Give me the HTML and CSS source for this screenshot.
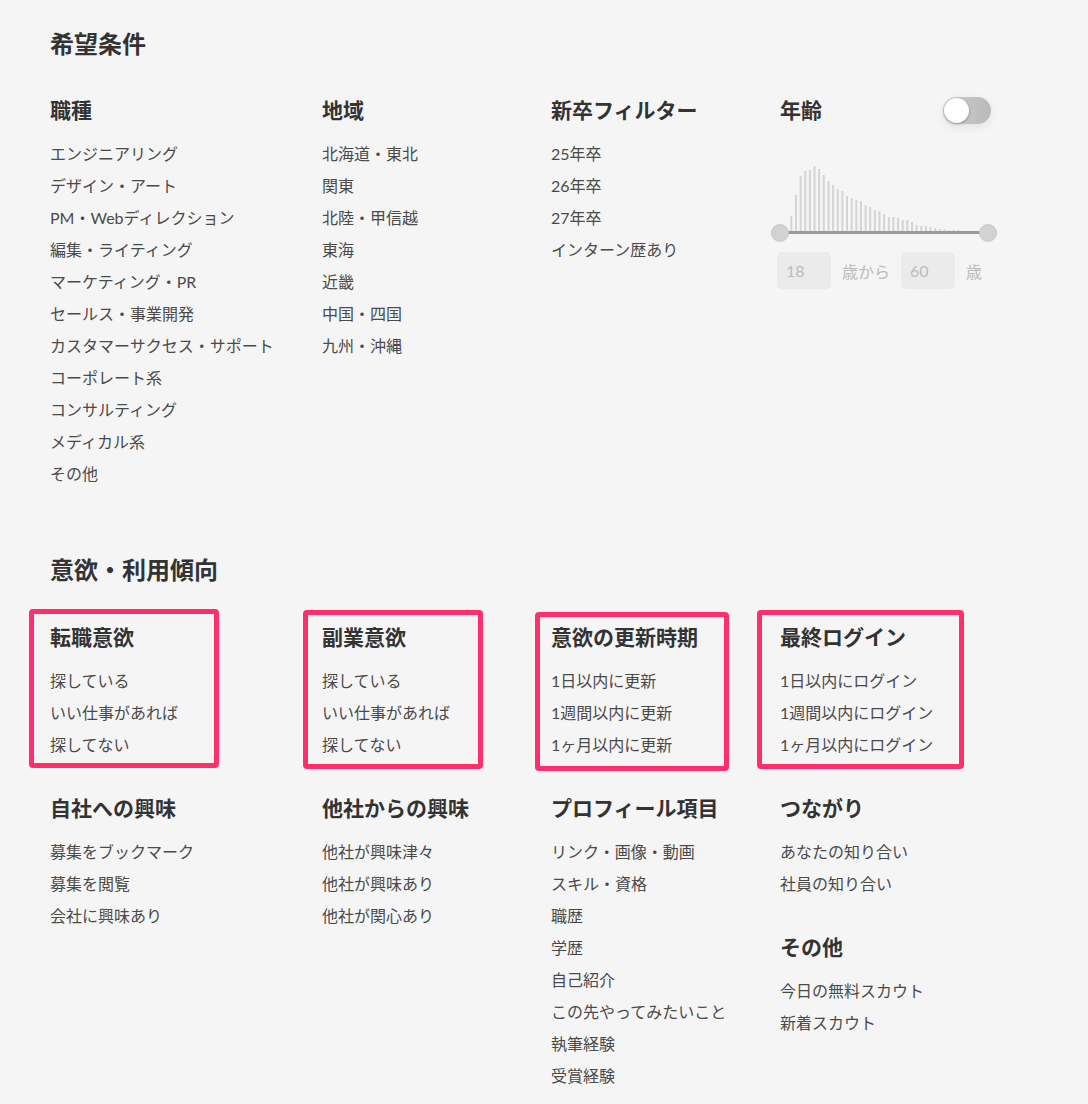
FILE: index.html
```
<!DOCTYPE html>
<html lang="ja">
<head>
  <meta charset="UTF-8" />
  <meta name="viewport" content="width=device-width, initial-scale=1" />
  <title>希望条件</title>
  <link rel="stylesheet" href="styles.css">
</head>
<body>
  <main class="page">
    <section class="section">
      <h2 class="section-title">希望条件</h2>
      <div class="columns">
        <div class="col">
          <div class="group">
            <h3>職種</h3>
            <ul>
              <li>エンジニアリング</li>
              <li>デザイン・アート</li>
              <li>PM・Webディレクション</li>
              <li>編集・ライティング</li>
              <li>マーケティング・PR</li>
              <li>セールス・事業開発</li>
              <li>カスタマーサクセス・サポート</li>
              <li>コーポレート系</li>
              <li>コンサルティング</li>
              <li>メディカル系</li>
              <li>その他</li>
            </ul>
          </div>
        </div>
        <div class="col">
          <div class="group">
            <h3>地域</h3>
            <ul>
              <li>北海道・東北</li>
              <li>関東</li>
              <li>北陸・甲信越</li>
              <li>東海</li>
              <li>近畿</li>
              <li>中国・四国</li>
              <li>九州・沖縄</li>
            </ul>
          </div>
        </div>
        <div class="col">
          <div class="group">
            <h3>新卒フィルター</h3>
            <ul>
              <li>25年卒</li>
              <li>26年卒</li>
              <li>27年卒</li>
              <li>インターン歴あり</li>
            </ul>
          </div>
        </div>
        <div class="col age">
          <div class="age-head">
            <h3>年齢</h3>
            <span class="toggle"><span class="knob"></span></span>
          </div>
          <div class="range">
            <svg class="hist" width="208" height="70" viewBox="0 0 208 70">
              <g fill="#d4d4d4">
                <rect x="5.7" y="64" width="2" height="5"/>
                <rect x="10.3" y="52" width="2" height="17"/>
                <rect x="15.0" y="31" width="2" height="38"/>
                <rect x="19.6" y="12" width="2" height="57"/>
                <rect x="24.3" y="7" width="2" height="62"/>
                <rect x="28.9" y="6" width="2" height="63"/>
                <rect x="33.5" y="2" width="2" height="67"/>
                <rect x="38.2" y="5" width="2" height="64"/>
                <rect x="42.8" y="11" width="2" height="58"/>
                <rect x="47.5" y="17" width="2" height="52"/>
                <rect x="52.1" y="21" width="2" height="48"/>
                <rect x="56.7" y="25" width="2" height="44"/>
                <rect x="61.4" y="27" width="2" height="42"/>
                <rect x="66.0" y="32" width="2" height="37"/>
                <rect x="70.7" y="34" width="2" height="35"/>
                <rect x="75.3" y="36" width="2" height="33"/>
                <rect x="79.9" y="37" width="2" height="32"/>
                <rect x="84.6" y="41" width="2" height="28"/>
                <rect x="89.2" y="43" width="2" height="26"/>
                <rect x="93.9" y="46" width="2" height="23"/>
                <rect x="98.5" y="47" width="2" height="22"/>
                <rect x="103.1" y="50" width="2" height="19"/>
                <rect x="107.8" y="53" width="2" height="16"/>
                <rect x="112.4" y="53" width="2" height="16"/>
                <rect x="117.1" y="54" width="2" height="15"/>
                <rect x="121.7" y="56" width="2" height="13"/>
                <rect x="126.3" y="56" width="2" height="13"/>
                <rect x="131.0" y="58" width="2" height="11"/>
                <rect x="135.6" y="61" width="2" height="8"/>
                <rect x="140.3" y="62" width="2" height="7"/>
                <rect x="144.9" y="62" width="2" height="7"/>
                <rect x="149.5" y="63" width="2" height="6"/>
                <rect x="154.2" y="64" width="2" height="5"/>
                <rect x="158.8" y="65" width="2" height="4"/>
                <rect x="163.5" y="65" width="2" height="4"/>
                <rect x="168.1" y="66" width="2" height="3"/>
                <rect x="172.7" y="66" width="2" height="3"/>
                <rect x="177.4" y="66" width="2" height="3"/>
                <rect x="182.0" y="67" width="2" height="2"/>
                <rect x="186.7" y="67" width="2" height="2"/>
                <rect x="191.3" y="67" width="2" height="2"/>
                <rect x="195.9" y="67" width="2" height="2"/>
              </g>
            </svg>
            <span class="range-line"></span>
            <span class="handle handle-min"></span>
            <span class="handle handle-max"></span>
          </div>
          <div class="age-inputs">
            <input class="age-box" type="text" value="18" disabled>
            <span>歳から</span>
            <input class="age-box" type="text" value="60" disabled>
            <span>歳</span>
          </div>
        </div>
      </div>
    </section>

    <section class="section section-second">
      <h2 class="section-title">意欲・利用傾向</h2>
      <div class="columns">
        <div class="col">
          <div class="group marked">
            <span class="mark mark-1"></span>
            <h3>転職意欲</h3>
            <ul>
              <li>探している</li>
              <li>いい仕事があれば</li>
              <li>探してない</li>
            </ul>
          </div>
          <div class="group">
            <h3>自社への興味</h3>
            <ul>
              <li>募集をブックマーク</li>
              <li>募集を閲覧</li>
              <li>会社に興味あり</li>
            </ul>
          </div>
        </div>
        <div class="col">
          <div class="group marked">
            <span class="mark mark-2"></span>
            <h3>副業意欲</h3>
            <ul>
              <li>探している</li>
              <li>いい仕事があれば</li>
              <li>探してない</li>
            </ul>
          </div>
          <div class="group">
            <h3>他社からの興味</h3>
            <ul>
              <li>他社が興味津々</li>
              <li>他社が興味あり</li>
              <li>他社が関心あり</li>
            </ul>
          </div>
        </div>
        <div class="col">
          <div class="group marked">
            <span class="mark mark-3"></span>
            <h3>意欲の更新時期</h3>
            <ul>
              <li>1日以内に更新</li>
              <li>1週間以内に更新</li>
              <li>1ヶ月以内に更新</li>
            </ul>
          </div>
          <div class="group">
            <h3>プロフィール項目</h3>
            <ul>
              <li>リンク・画像・動画</li>
              <li>スキル・資格</li>
              <li>職歴</li>
              <li>学歴</li>
              <li>自己紹介</li>
              <li>この先やってみたいこと</li>
              <li>執筆経験</li>
              <li>受賞経験</li>
            </ul>
          </div>
        </div>
        <div class="col">
          <div class="group marked">
            <span class="mark mark-4"></span>
            <h3>最終ログイン</h3>
            <ul>
              <li>1日以内にログイン</li>
              <li>1週間以内にログイン</li>
              <li>1ヶ月以内にログイン</li>
            </ul>
          </div>
          <div class="group">
            <h3>つながり</h3>
            <ul>
              <li>あなたの知り合い</li>
              <li>社員の知り合い</li>
            </ul>
          </div>
          <div class="group">
            <h3>その他</h3>
            <ul>
              <li>今日の無料スカウト</li>
              <li>新着スカウト</li>
            </ul>
          </div>
        </div>
      </div>
    </section>
  </main>
</body>
</html>
```

FILE: styles.css
```
* { margin: 0; padding: 0; box-sizing: border-box; }
body {
  font-family: 'Lato', 'Noto Sans CJK JP', sans-serif;
  background: #f5f5f5;
  color: #444;
}
.page { padding: 28px 0 0 50px; }

.section-title { font-size: 24px; line-height: 32px; font-weight: 700; color: #333; margin-bottom: 36px; }
.section-second { margin-top: 64px; }
.section-second .section-title { margin-bottom: 37px; }

.columns { display: grid; grid-template-columns: 272px 229px 229px 1fr; }
.col { display: flex; flex-direction: column; gap: 33px; }

.group h3, .age-head h3 { font-size: 21px; line-height: 28px; font-weight: 700; color: #333; }
.group ul { list-style: none; margin-top: 14px; }
.group li { font-size: 16px; line-height: 32px; color: #4a4a4a; white-space: nowrap; }

/* annotation boxes */
.marked { position: relative; }
.mark { position: absolute; border: 5px solid #ff2f6d; border-radius: 4px; height: 159px; }
.mark-1 { left: -21px; top: -14px; width: 190px; }
.mark-2 { left: -19px; top: -13px; width: 180px; }
.mark-3 { left: -16px; top: -11px; width: 194px; }
.mark-4 { left: -23px; top: -13px; width: 207px; }

/* age */
.col.age { gap: 0; }
.age-head { width: 211px; display: flex; justify-content: space-between; align-items: center; }
.toggle {
  position: relative; display: block; width: 48px; height: 27px; border-radius: 14px;
  background: linear-gradient(90deg, #cfcfcf, #b9b9b9);
  box-shadow: 0 3px 10px rgba(0,0,0,0.08);
}
.knob {
  position: absolute; left: 1px; top: 1px; width: 25px; height: 25px; border-radius: 50%;
  background: #fff; box-shadow: 0 1px 3px rgba(0,0,0,0.3);
}
.range { position: relative; width: 208px; height: 70px; margin-top: 40px; }
.hist { display: block; }
.range-line { position: absolute; left: 0; right: 0; top: 67px; height: 3px; background: #9a9a9a; }
.handle {
  position: absolute; top: 60px; width: 18px; height: 18px; border-radius: 50%;
  background: #d2d2d2; border: 1px solid #c8c8c8;
}
.handle-min { left: -9px; }
.handle-max { right: -9px; }
.age-inputs { display: flex; align-items: center; gap: 11px; margin: 18px 0 0 -3px; color: #bbb; font-size: 16px; }
.age-box {
  width: 54px; height: 37px; border: none; border-radius: 5px; background: #ebebeb;
  padding-left: 9px; font: inherit; font-size: 16px; color: #bbb;
}
```
